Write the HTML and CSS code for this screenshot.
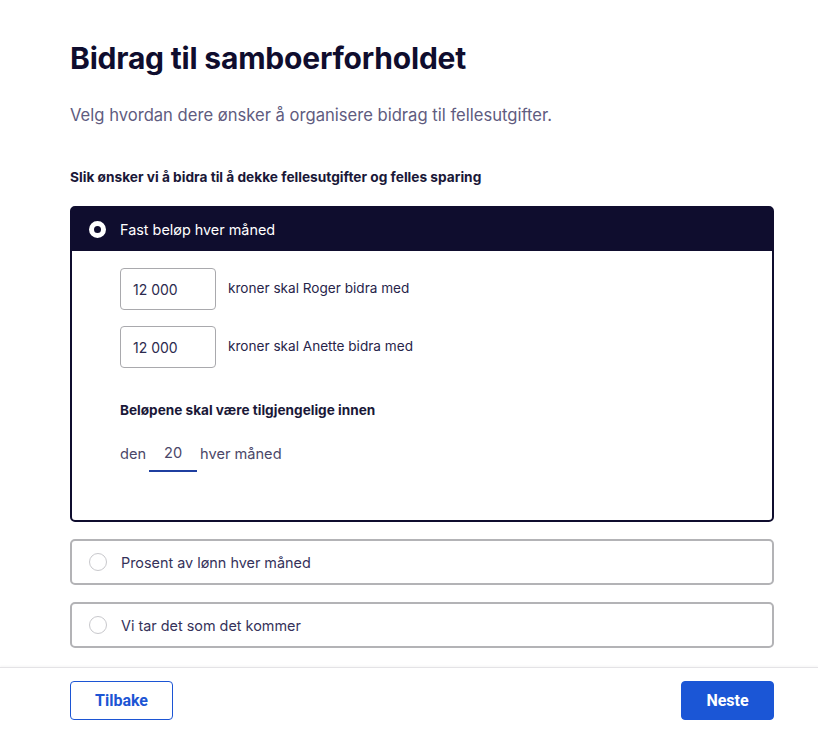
FILE: index.html
```html
<!DOCTYPE html>
<html lang="no">
<head>
<meta charset="utf-8">
<title>Bidrag til samboerforholdet</title>
<link rel="stylesheet" href="styles.css">
</head>
<body>
<main class="page">
  <h1 class="title">Bidrag til samboerforholdet</h1>
  <p class="lead">Velg hvordan dere ønsker å organisere bidrag til fellesutgifter.</p>
  <h2 class="question">Slik ønsker vi å bidra til å dekke fellesutgifter og felles sparing</h2>

  <div class="options">
    <section class="option option--selected">
      <div class="option__head">
        <span class="radio radio--on"></span>
        <span class="option__label">Fast beløp hver måned</span>
      </div>
      <div class="option__body">
        <div class="amount-row">
          <div class="field">12 000</div>
          <span class="amount-text">kroner skal Roger bidra med</span>
        </div>
        <div class="amount-row">
          <div class="field">12 000</div>
          <span class="amount-text">kroner skal Anette bidra med</span>
        </div>
        <h3 class="sub">Beløpene skal være tilgjengelige innen</h3>
        <div class="day-row">
          <span class="day-text">den</span>
          <span class="day-field">20</span>
          <span class="day-text">hver måned</span>
        </div>
      </div>
    </section>

    <section class="option">
      <div class="option__head option__head--plain">
        <span class="radio"></span>
        <span class="option__label">Prosent av lønn hver måned</span>
      </div>
    </section>

    <section class="option">
      <div class="option__head option__head--plain">
        <span class="radio"></span>
        <span class="option__label">Vi tar det som det kommer</span>
      </div>
    </section>
  </div>
</main>
<footer class="footer">
  <button class="btn btn--ghost">Tilbake</button>
  <button class="btn btn--primary">Neste</button>
</footer>
</body>
</html>
```

FILE: styles.css
```css
* { box-sizing: border-box; }
html, body { margin: 0; padding: 0; background: #fff; }
body {
  font-family: "Inter", "Noto Sans", sans-serif;
  color: #2c2a4e;
  width: 818px;
  height: 732px;
  display: flex;
  flex-direction: column;
}
.page {
  flex: 1;
  padding: 40px 44px 0 70px;
}
.title {
  margin: 0;
  font-size: 30px;
  line-height: 36px;
  font-weight: 700;
  color: #0f0d2e;
  letter-spacing: -0.2px;
}
.lead {
  margin: 26px 0 0;
  font-size: 16.6px;
  line-height: 26px;
  color: #5f5c80;
}
.question {
  margin: 39px 0 0;
  font-size: 13.7px;
  line-height: 20px;
  font-weight: 700;
  color: #1a1838;
}
.options {
  margin-top: 19px;
  display: flex;
  flex-direction: column;
  gap: 17px;
}
.option {
  border: 2px solid #b3b3b6;
  border-radius: 5px;
  background: #fff;
}
.option--selected {
  border-color: #0f0d2e;
}
.option__head {
  display: flex;
  align-items: center;
  gap: 14px;
  height: 43px;
  padding-left: 17px;
}
.option--selected .option__head {
  background: #0f0d2e;
  color: #fff;
}
.option__head--plain { height: 42px; color: #35325a; }
.option__label {
  font-size: 14.4px;
  color: inherit;
}
.option--selected .option__label { color: #fff; }
.radio {
  width: 18px;
  height: 18px;
  border-radius: 50%;
  border: 1px solid #c8c8cc;
  background: #fff;
  flex: none;
}
.radio--on {
  width: 17px;
  height: 17px;
  border: 5px solid #fff;
  background: #0f0d2e;
}
.option__body {
  padding: 17px 48px 48px 48px;
}
.amount-row {
  display: flex;
  align-items: center;
  gap: 12px;
}
.amount-row + .amount-row { margin-top: 16px; }
.field {
  width: 96px;
  height: 42px;
  border: 1px solid #a9a9ad;
  border-radius: 4px;
  padding: 0 12px;
  display: flex;
  align-items: center;
  font-size: 14px;
  color: #2c2a4e;
}
.amount-text { font-size: 13.6px; padding-bottom: 2px; color: #27244a; }
.sub {
  margin: 32px 0 0;
  font-size: 13.6px;
  line-height: 20px;
  font-weight: 700;
  color: #1a1838;
}
.day-row {
  margin-top: 12px;
  display: flex;
  align-items: center;
  gap: 3px;
  font-size: 14.6px;
  color: #4a4768;
}
.day-text { padding-top: 3px; }
.day-field {
  width: 48px;
  height: 40px;
  display: flex;
  align-items: center;
  justify-content: center;
  padding-top: 4px;
  border-bottom: 2px solid #1f3fa0;
}
.footer {
  flex: none;
  height: 65px;
  border-top: 1px solid #e4e3e6;
  box-shadow: 0 -1px 2px rgba(0,0,0,0.04);
  display: flex;
  align-items: center;
  justify-content: space-between;
  padding: 0 44px 0 70px;
}
.btn {
  height: 39px;
  border-radius: 4px;
  font-family: "Roboto", "Liberation Sans", sans-serif;
  font-size: 16px;
  font-weight: 700;
  cursor: pointer;
}
.btn--ghost {
  width: 103px;
  background: #fff;
  border: 1px solid #1c55d4;
  color: #1c55d4;
}
.btn--primary {
  width: 93px;
  background: #1b56d6;
  border: 1px solid #1b56d6;
  color: #fff;
}
```
